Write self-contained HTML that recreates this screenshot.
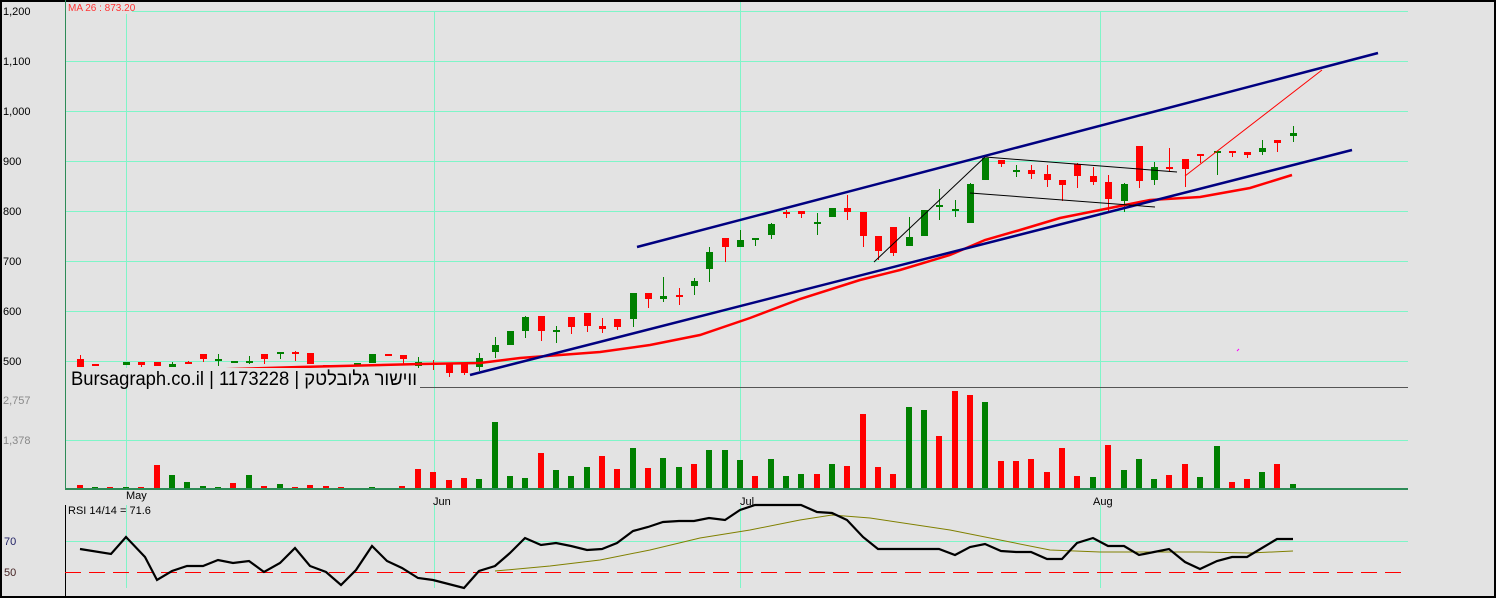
<!DOCTYPE html>
<html><head><meta charset="utf-8">
<style>
html,body{margin:0;padding:0;background:#e3e3e3;}
svg{display:block;font-family:"Liberation Sans",Arial,sans-serif;}
.ce{shape-rendering:crispEdges;}
</style></head>
<body>
<svg id="c" width="1496" height="598" viewBox="0 0 1496 598" xmlns="http://www.w3.org/2000/svg">
<rect x="0" y="0" width="1496" height="598" fill="#e3e3e3"/>
<g class="ce" fill="#7ff5c8">
<rect x="65" y="11" width="1343" height="1"/>
<rect x="65" y="61" width="1343" height="1"/>
<rect x="65" y="111" width="1343" height="1"/>
<rect x="65" y="161" width="1343" height="1"/>
<rect x="65" y="211" width="1343" height="1"/>
<rect x="65" y="261" width="1343" height="1"/>
<rect x="65" y="311" width="1343" height="1"/>
<rect x="65" y="361" width="1343" height="1"/>
<rect x="65" y="440" width="1343" height="1"/>
<rect x="65" y="541" width="1343" height="1"/>
<rect x="126" y="12" width="1" height="477"/>
<rect x="434" y="12" width="1" height="477"/>
<rect x="740" y="0" width="1" height="489"/>
<rect x="1100" y="12" width="1" height="477"/>
<rect x="126" y="505" width="1" height="83"/>
<rect x="434" y="505" width="1" height="83"/>
<rect x="740" y="505" width="1" height="83"/>
<rect x="1100" y="505" width="1" height="83"/>
</g>
<g class="ce">
<rect x="0" y="0" width="1496" height="2" fill="#000"/>
<rect x="0" y="0" width="2" height="598" fill="#000"/>
<rect x="1494" y="0" width="2" height="598" fill="#000"/>
<rect x="0" y="596" width="1496" height="2" fill="#000"/>
<rect x="65" y="0" width="1" height="489" fill="#2e8b57"/>
<rect x="420" y="387" width="988" height="1" fill="#555"/>
<rect x="65" y="488" width="1343" height="2" fill="#2e8b57"/>
<rect x="65" y="505" width="1" height="92" fill="#000"/>
</g>
<line x1="65" y1="572.5" x2="1405" y2="572.5" stroke="#f00" stroke-width="1" stroke-dasharray="16,8" class="ce"/>
<g font-size="11" fill="#000">
<text x="3" y="15">1,200</text>
<text x="3" y="65">1,100</text>
<text x="3" y="115">1,000</text>
<text x="3" y="165">900</text>
<text x="3" y="215">800</text>
<text x="3" y="265">700</text>
<text x="3" y="315">600</text>
<text x="3" y="365">500</text>
<text x="3" y="404" fill="#888">2,757</text>
<text x="3" y="444" fill="#888">1,378</text>
<text x="4" y="545" fill="#226">70</text>
<text x="4" y="576" fill="#422">50</text>
<text x="126" y="499">May</text>
<text x="433" y="505">Jun</text>
<text x="740" y="505">Jul</text>
<text x="1093" y="505">Aug</text>
<text x="68" y="514">RSI 14/14 = 71.6</text>
</g>
<rect x="66" y="3" width="66" height="11" fill="#e3e3e3"/>
<text x="68" y="11" font-size="10" fill="#f33">MA 26 : 873.20</text>
<g id="cand" class="ce"></g>
<g id="vol" class="ce"></g>
<polyline fill="none" stroke="#f00" stroke-width="2.5" points="73,371 200,370 300,367 420,364 480,363 520,358 560,355 600,352 650,345 700,335 750,318 800,299 860,280 900,270 950,255 985,240 1020,230 1060,218 1100,210 1150,200 1200,197 1250,188 1292,175"/>
<line x1="637" y1="247" x2="1378" y2="53" stroke="#000080" stroke-width="2.5"/>
<line x1="470" y1="375" x2="1352" y2="150" stroke="#000080" stroke-width="2.5"/>
<g stroke="#000" stroke-width="1" fill="none">
<line x1="874" y1="262" x2="985" y2="157"/>
<line x1="985" y1="157" x2="1177" y2="172"/>
<line x1="970" y1="193" x2="1155" y2="207"/>
</g>
<line x1="1185" y1="176" x2="1322" y2="70" stroke="#f00" stroke-width="1"/>
<line x1="1237" y1="351" x2="1239" y2="349" stroke="#f0f" stroke-width="1"/>
<rect x="69" y="368" width="351" height="20" fill="#e3e3e3"/>
<text x="71" y="385" font-size="19" fill="#000" textLength="346" lengthAdjust="spacingAndGlyphs" font-family="'Liberation Sans','Noto Sans CJK SC',sans-serif">Bursagraph.co.il | 1173228 | <tspan>&#x202B;ווישור גלובלטק&#x202C;</tspan></text>
<polyline fill="none" stroke="#808000" stroke-width="1" points="495,571 550,566 600,560 650,550 700,538 750,530 800,520 832,515 870,518 950,530 1050,550 1100,552 1200,552 1250,553 1293,551"/>
<polyline fill="none" stroke="#000" stroke-width="2.2" points="80,549 111,554 126,537 145,557 157,580 172,571 187,566 203,566 218,560 233,563 249,561 264,572 280,563 295,548 310,566 326,572 341,585 356,570 372,546 387,561 402,568 418,578 433,580 464,588 479,571 495,566 510,553 525,538 541,545 556,543 571,546 587,550 602,549 617,543 633,531 648,527 663,522 679,521 694,521 709,518 725,520 740,510 755,505 771,505 801,505 817,512 832,513 847,520 863,537 878,549 893,549 909,549 939,549 955,555 970,547 985,544 1001,551 1016,552 1031,552 1047,559 1062,559 1077,543 1093,538 1108,546 1124,546 1139,555 1154,552 1169,549 1185,562 1200,569 1217,561 1232,557 1247,557 1262,548 1277,539 1293,539"/>
</svg>
<script>
var R="#f00",G="#008000",NS="http://www.w3.org/2000/svg";
var C=[[80,R,359,367,355,367],[95,R,364,366,364,366],[126,G,362,365,362,365],[141,R,362,365,362,367],[157,R,362,366,362,366],[172,G,364,367,362,367],[188,R,362,363,361,364],[203,R,354,359,354,362],[218,G,359,360,354,366],[234,G,361,362,361,362],[249,G,361,362,356,364],[264,R,354,359,354,364],[280,G,352,353,352,359],[295,R,352,353,351,361],[310,R,353,364,353,364],[326,R,365,366,365,366],[357,G,363,365,363,365],[372,G,354,363,354,363],[388,R,354,355,354,355],[403,R,355,359,355,364],[418,G,362,366,357,370],[433,R,363,364,360,370],[449,R,363,373,363,377],[464,R,363,373,363,375],[479,G,358,367,353,371],[495,G,345,352,337,358],[510,G,331,345,331,345],[525,G,317,331,316,338],[541,R,316,331,316,341],[556,G,330,331,326,343],[571,R,317,327,317,334],[587,R,313,326,313,332],[602,R,326,329,318,333],[617,R,319,327,319,330],[633,G,293,319,293,327],[648,R,293,299,293,308],[663,G,296,299,277,302],[679,R,295,296,288,305],[694,G,281,286,278,295],[709,G,252,269,247,282],[725,R,238,247,238,262],[740,G,240,247,230,247],[755,G,238,240,238,246],[771,G,224,235,223,239],[786,R,212,213,210,218],[801,R,211,214,211,218],[817,G,222,223,213,235],[832,G,208,217,208,217],[847,R,208,212,195,220],[863,R,212,236,212,247],[878,R,236,251,236,260],[893,R,227,253,227,256],[909,G,237,246,217,246],[924,G,210,236,210,236],[939,G,205,206,189,220],[955,G,209,210,200,217],[970,G,184,223,183,223],[985,G,158,180,158,180],[1001,R,160,164,160,167],[1016,G,170,171,165,177],[1031,R,170,174,165,179],[1047,R,174,180,165,187],[1062,R,180,185,180,201],[1077,R,164,176,163,188],[1093,R,176,182,167,185],[1108,R,182,199,175,211],[1124,G,184,201,183,212],[1139,R,146,181,146,188],[1154,G,167,180,162,185],[1169,R,167,168,148,172],[1185,R,159,169,159,187],[1200,R,154,155,154,163],[1217,G,151,152,151,175],[1232,R,151,152,151,157],[1247,R,152,155,152,158],[1262,G,148,152,140,155],[1277,R,140,143,140,152],[1293,G,133,136,126,142]];
var g=document.getElementById("cand");
C.forEach(function(c){
 var l=document.createElementNS(NS,"rect");l.setAttribute("x",c[0]);l.setAttribute("y",c[4]);l.setAttribute("width",1);l.setAttribute("height",Math.max(1,c[5]-c[4]));l.setAttribute("fill",c[1]);g.appendChild(l);
 var b=document.createElementNS(NS,"rect");b.setAttribute("x",c[0]-3);b.setAttribute("y",c[2]);b.setAttribute("width",7);b.setAttribute("height",Math.max(2,c[3]-c[2]));b.setAttribute("fill",c[1]);g.appendChild(b);
});
var V=[[80,485,R],[95,487,G],[110,487,R],[126,487,G],[141,487,R],[157,465,R],[172,475,G],[187,482,G],[203,486,G],[218,487,G],[233,483,R],[249,475,G],[264,486,R],[280,484,G],[295,487,R],[310,485,R],[326,486,R],[341,487,R],[372,487,G],[387,488,R],[402,486,R],[418,469,R],[433,472,R],[449,480,R],[464,478,R],[479,479,G],[495,422,G],[510,476,G],[525,478,G],[541,453,R],[556,470,G],[571,476,G],[587,467,G],[602,456,R],[617,469,R],[633,448,G],[648,468,R],[663,458,G],[679,467,G],[694,464,R],[709,450,G],[725,450,G],[740,460,G],[755,476,R],[771,459,G],[786,476,G],[801,474,G],[817,474,R],[832,464,G],[847,466,R],[863,414,R],[878,467,R],[893,474,R],[909,407,G],[924,410,G],[939,436,R],[955,391,R],[970,395,R],[985,402,G],[1001,461,R],[1016,461,R],[1031,459,R],[1047,472,R],[1062,448,R],[1077,476,R],[1093,477,G],[1108,445,R],[1124,470,G],[1139,459,G],[1154,479,G],[1169,475,R],[1185,464,R],[1200,477,G],[1217,446,G],[1232,482,R],[1247,479,R],[1262,472,G],[1277,464,R],[1293,484,G]];
var v=document.getElementById("vol");
V.forEach(function(c){var b=document.createElementNS(NS,"rect");b.setAttribute("x",c[0]-3);b.setAttribute("y",c[1]);b.setAttribute("width",6);b.setAttribute("height",488-c[1]);b.setAttribute("fill",c[2]);v.appendChild(b);});
</script>
</body></html>
